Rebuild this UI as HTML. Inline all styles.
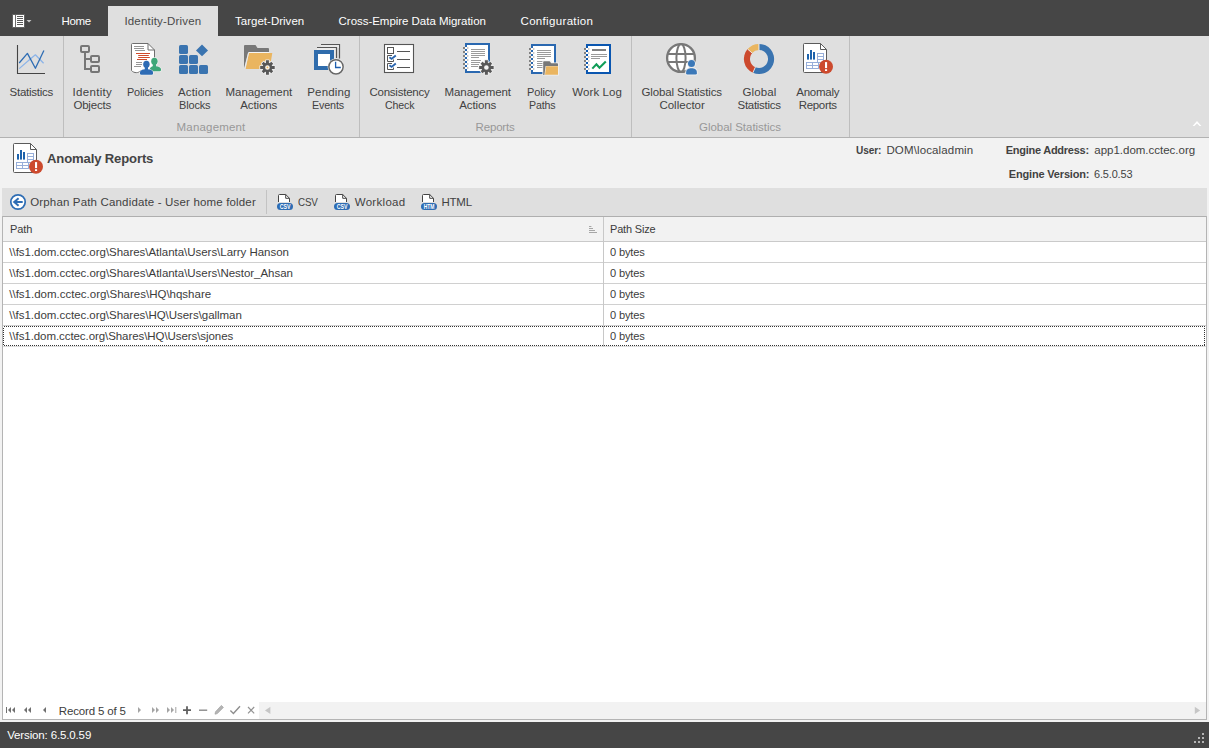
<!DOCTYPE html>
<html lang="en"><head><meta charset="utf-8"><title>Anomaly Reports</title>
<style>
html,body{margin:0;padding:0;}
body{width:1209px;height:748px;overflow:hidden;position:relative;background:#f2f2f2;font-family:"Liberation Sans",sans-serif;font-size:12px;}
.b{position:absolute;}
.t{position:absolute;white-space:pre;font-family:"Liberation Sans",sans-serif;}
svg{position:absolute;overflow:visible;}

</style></head>
<body>
<!-- top dark bar -->
<div class="b" style="left:0;top:0;width:1209px;height:36px;background:#464646"></div>
<div class="b" style="left:108px;top:6px;width:110px;height:30px;background:#dfdfdf"></div>
<!-- ribbon -->
<div class="b" style="left:0;top:36px;width:1209px;height:101px;background:#dfdfdf"></div>
<div class="b" style="left:0;top:137px;width:1209px;height:1px;background:#b2b2b2"></div>
<div class="b" style="left:63px;top:36px;width:1px;height:101px;background:#bebebe"></div>
<div class="b" style="left:359px;top:36px;width:1px;height:101px;background:#bebebe"></div>
<div class="b" style="left:631px;top:36px;width:1px;height:101px;background:#bebebe"></div>
<div class="b" style="left:849px;top:36px;width:1px;height:101px;background:#bebebe"></div>
<!-- toolbar -->
<div class="b" style="left:2px;top:188px;width:1205px;height:28px;background:#dfdfdf"></div>
<div class="b" style="left:266px;top:190px;width:1px;height:24px;background:#c3c3c3"></div>
<!-- grid -->
<div class="b" style="left:2px;top:216px;width:1205px;height:504px;background:#ffffff"></div>
<div class="b" style="left:3px;top:217px;width:1203px;height:24px;background:#f2f2f2"></div>
<div class="b" style="left:2px;top:216px;width:1205px;height:1px;background:#afafaf"></div>
<div class="b" style="left:2px;top:719px;width:1205px;height:1px;background:#b4b4b4"></div>
<div class="b" style="left:2px;top:216px;width:1px;height:504px;background:#b4b4b4"></div>
<div class="b" style="left:1206px;top:216px;width:1px;height:504px;background:#b4b4b4"></div>
<div class="b" style="left:3px;top:241px;width:1203px;height:1px;background:#cacaca"></div>
<div class="b" style="left:3px;top:262px;width:1203px;height:1px;background:#d0d0d0"></div>
<div class="b" style="left:3px;top:283px;width:1203px;height:1px;background:#d0d0d0"></div>
<div class="b" style="left:3px;top:304px;width:1203px;height:1px;background:#d0d0d0"></div>
<div class="b" style="left:3px;top:325px;width:1203px;height:1px;background:#d0d0d0"></div>
<div class="b" style="left:3px;top:346px;width:1203px;height:1px;background:#dcdcdc"></div>
<div class="b" style="left:603px;top:217px;width:1px;height:130px;background:#c8c8c8"></div>
<!-- focus rect -->
<svg style="left:3px;top:326px" width="1202" height="20"><rect x="0.5" y="0.5" width="1201" height="19" fill="none" stroke="#333" stroke-width="1" stroke-dasharray="1 1" shape-rendering="crispEdges"/></svg>
<!-- navigator scroll area -->
<div class="b" style="left:259px;top:702px;width:947px;height:17px;background:#f2f2f2"></div>
<!-- status bar -->
<div class="b" style="left:0;top:722px;width:1209px;height:26px;background:#464646"></div>
<svg style="left:0;top:0" width="1209" height="748" viewBox="0 0 1209 748">
<g><rect x="12" y="14" width="13" height="14" fill="#606060"/><rect x="13" y="15" width="2" height="12" fill="#ffffff"/><rect x="15" y="15" width="1" height="12" fill="#6e6e6e"/><rect x="16" y="15" width="8" height="12" fill="#ffffff"/>
<rect x="17" y="16" width="6" height="1" fill="#5a5a5a"/>
<rect x="17" y="18" width="6" height="1" fill="#5a5a5a"/>
<rect x="17" y="20" width="6" height="1" fill="#5a5a5a"/>
<rect x="17" y="22" width="6" height="1" fill="#5a5a5a"/>
<rect x="17" y="24" width="6" height="1" fill="#5a5a5a"/>
<path d="M26.5,20 h5 l-2.5,2.6z" fill="#c8c8c8"/></g>
<g fill="none"><path d="M17.5,45 V73.5 H45" stroke="#444444" stroke-width="1.1"/><path d="M19.2,68.6 L30,59.3 L35.4,54.8 L43.6,63.3" stroke="#8cb4e8" stroke-width="1.25" stroke-linejoin="round"/><path d="M19.2,63 L27.4,53.4 L35.4,68.3 L43.9,50.5" stroke="#2e6db4" stroke-width="1.3" stroke-linejoin="round"/></g>
<g fill="none" stroke="#767676" stroke-width="2"><rect x="81" y="46" width="8" height="6" rx="1"/><rect x="91" y="56" width="8" height="6" rx="1"/><rect x="91" y="66" width="8" height="6" rx="1"/><path d="M85,53 V69 H90 M85,59 H90"/></g>
<g><path d="M132.5,43.5 H148 L154.5,50 V71 H140 C139,73 134,73.5 131.5,70.5 V44.5 Q131.5,43.5 132.5,43.5Z" fill="#ffffff" stroke="#6e6e6e" stroke-width="1"/><path d="M148,43.5 V50 H154.5" fill="none" stroke="#6e6e6e" stroke-width="1"/><g stroke="#8a8a8a" stroke-width="0.9"><path d="M134,46.5h10M134,48.5h10M135,50.5h10M136,62.5h6M136,64.5h6M134,66.5h7"/></g><g stroke="#d04a2a" stroke-width="1.1"><path d="M136,53.5h14M138.2,55.5h10.6M138.2,57.5h11.6M137,59.5h10"/></g>
<g fill="#f4f4f4" stroke="#f4f4f4" stroke-width="1.1" stroke-linejoin="round"><ellipse cx="154.4" cy="61.3" rx="3.2" ry="3.52"/><path d="M151.10,71.3 Q149.8,71.3 149.8,70.00 L149.8,69.19 C149.8,67.16 152.04,66.6 152.80,66.20 L156.00,66.20 C158.76,66.6 161,67.16 161,69.19 L161,70.00 Q161,71.3 159.70,71.3Z"/></g><g fill="#3fa778"><ellipse cx="154.4" cy="61.3" rx="3.2" ry="3.52"/><path d="M152.80,61.30 L156.00,61.30 L156.00,67.10 L152.80,67.10Z"/><path d="M151.10,71.3 Q149.8,71.3 149.8,70.00 L149.8,69.19 C149.8,67.16 152.04,66.6 152.80,66.20 L156.00,66.20 C158.76,66.6 161,67.16 161,69.19 L161,70.00 Q161,71.3 159.70,71.3Z"/></g>
<g fill="#f4f4f4" stroke="#f4f4f4" stroke-width="1.1" stroke-linejoin="round"><ellipse cx="146.4" cy="64.2" rx="3.2" ry="3.52"/><path d="M141.30,74.8 Q140,74.8 140,73.50 L140,72.46 C140,70.22 142.60,69.6 144.80,69.20 L148.00,69.20 C150.40,69.6 153,70.22 153,72.46 L153,73.50 Q153,74.8 151.70,74.8Z"/></g><g fill="#2e6cb5"><ellipse cx="146.4" cy="64.2" rx="3.2" ry="3.52"/><path d="M144.80,64.20 L148.00,64.20 L148.00,70.10 L144.80,70.10Z"/><path d="M141.30,74.8 Q140,74.8 140,73.50 L140,72.46 C140,70.22 142.60,69.6 144.80,69.20 L148.00,69.20 C150.40,69.6 153,70.22 153,72.46 L153,73.50 Q153,74.8 151.70,74.8Z"/></g>
</g>
<g fill="#3a74b0">
<rect x="179" y="45" width="9" height="9" rx="1.6"/>
<rect x="179" y="55" width="9" height="9" rx="1.6"/>
<rect x="189" y="55" width="9" height="9" rx="1.6"/>
<rect x="179" y="65" width="9" height="9" rx="1.6"/>
<rect x="189" y="65" width="9" height="9" rx="1.6"/>
<rect x="199" y="65" width="9" height="9" rx="1.6"/>
<path d="M202,44.6 L208,50.4 L202,56.2 L196,50.4Z"/></g>
<g><path d="M244,46 Q244,45 245,45 H255.5 L257.5,48 H268 Q269,48 269,49 V53 H248 L244,68.5Z" fill="#787878"/><path d="M248.9,53 H272.3 L269.6,69 H245.6Z" fill="#eab560"/><path d="M248.4,52.5 H269.4" stroke="#f4f4f4" stroke-width="1" fill="none"/><path d="M248.6,52.6 L244.9,68.6" stroke="#ececec" stroke-width="0.9" fill="none"/>
<path d="M266.02,62.82 L265.98,60.20 L268.92,60.20 L268.88,62.82 L269.71,63.16 L271.26,61.70 L273.20,63.64 L271.74,65.19 L272.08,66.02 L274.70,65.98 L274.70,68.92 L272.08,68.88 L271.74,69.71 L273.20,71.26 L271.26,73.20 L269.71,71.74 L268.88,72.08 L268.92,74.70 L265.98,74.70 L266.02,72.08 L265.19,71.74 L263.64,73.20 L261.70,71.26 L263.16,69.71 L262.82,68.88 L260.20,68.92 L260.20,65.98 L262.82,66.02 L263.16,65.19 L261.70,63.64 L263.64,61.70 L265.19,63.16Z M265.15,67.45 a2.3,2.3 0 1,0 4.6,0 a2.3,2.3 0 1,0 -4.6,0Z" fill="#ececec" stroke="#ececec" stroke-width="1.6" stroke-linejoin="round"/>
<circle cx="267.45" cy="67.45" r="2.6" fill="#fbf6ec"/><circle cx="267.45" cy="67.45" r="0.9" fill="#f0b860"/>
<path d="M266.02,62.82 L265.98,60.20 L268.92,60.20 L268.88,62.82 L269.71,63.16 L271.26,61.70 L273.20,63.64 L271.74,65.19 L272.08,66.02 L274.70,65.98 L274.70,68.92 L272.08,68.88 L271.74,69.71 L273.20,71.26 L271.26,73.20 L269.71,71.74 L268.88,72.08 L268.92,74.70 L265.98,74.70 L266.02,72.08 L265.19,71.74 L263.64,73.20 L261.70,71.26 L263.16,69.71 L262.82,68.88 L260.20,68.92 L260.20,65.98 L262.82,66.02 L263.16,65.19 L261.70,63.64 L263.64,61.70 L265.19,63.16Z M265.15,67.45 a2.3,2.3 0 1,0 4.6,0 a2.3,2.3 0 1,0 -4.6,0Z" fill="#565656" fill-rule="evenodd"/></g>
<g><path d="M321,44.5 H339.5 V58.5" fill="none" stroke="#555555" stroke-width="1.2"/><path d="M321,45.2 H339 V58" fill="none" stroke="#f4f4f4" stroke-width="0.01"/><rect x="317" y="48" width="19" height="10" fill="#ececec"/><rect x="321" y="45" width="18" height="3" fill="#e9e9e9"/><path d="M317,47.5 H336.5 V58" fill="none" stroke="#555555" stroke-width="1.2"/><rect x="314" y="50" width="20" height="20" fill="#2f6cac"/><rect x="318" y="54" width="12" height="12" fill="#ffffff"/><circle cx="336" cy="66.8" r="8.4" fill="#ebebeb"/><circle cx="336" cy="66.8" r="7.15" fill="#ffffff" stroke="#686868" stroke-width="1.5"/><path d="M335.6,61.8 V67.5 H340.8" fill="none" stroke="#1f5fae" stroke-width="1.3"/></g>
<g><rect x="384.5" y="44.5" width="29" height="28" fill="#ffffff" stroke="#555555" stroke-width="1.1"/><g fill="none" stroke="#555555" stroke-width="1"><rect x="387.5" y="47.5" width="6" height="6"/><path d="M392,55.5 H387.5 V61.5 H393.5 V59.5"/><path d="M392,63.5 H387.5 V69.5 H393.5 V67.5"/><path d="M397,51.5h13M397,59.5h13M397,67.5h13"/></g><g fill="none" stroke="#2a65ae" stroke-width="1.9"><path d="M389.4,57.2 L391.6,58.9 L395.8,55.4"/><path d="M389.4,65.2 L391.6,66.9 L395.8,63.4"/></g></g>
<g transform="translate(465,43)"><rect x="0" y="0" width="25" height="30" fill="#2a68b0"/><rect x="2" y="2" width="21" height="26" fill="#ffffff"/><rect x="-2" y="4" width="2" height="2" fill="#808080"/><rect x="0" y="4" width="2" height="2" fill="#ffffff"/><rect x="2" y="4" width="1.4" height="2" fill="#c9c9c9"/><rect x="-2" y="8" width="2" height="2" fill="#808080"/><rect x="0" y="8" width="2" height="2" fill="#ffffff"/><rect x="2" y="8" width="1.4" height="2" fill="#c9c9c9"/><rect x="-2" y="12" width="2" height="2" fill="#808080"/><rect x="0" y="12" width="2" height="2" fill="#ffffff"/><rect x="2" y="12" width="1.4" height="2" fill="#c9c9c9"/><rect x="-2" y="16" width="2" height="2" fill="#808080"/><rect x="0" y="16" width="2" height="2" fill="#ffffff"/><rect x="2" y="16" width="1.4" height="2" fill="#c9c9c9"/><rect x="-2" y="20" width="2" height="2" fill="#808080"/><rect x="0" y="20" width="2" height="2" fill="#ffffff"/><rect x="2" y="20" width="1.4" height="2" fill="#c9c9c9"/><rect x="-2" y="24" width="2" height="2" fill="#808080"/><rect x="0" y="24" width="2" height="2" fill="#ffffff"/><rect x="2" y="24" width="1.4" height="2" fill="#c9c9c9"/></g>
<g stroke="#909090" stroke-width="0.9"><path d="M471,49.5h14M471,51.5h14M471,53.5h14M471,55.5h14M471,57.5h8M471,60.5h10M471,62.5h9M471,64.5h8M471,66.5h7"/></g>
<path d="M484.97,62.87 L484.93,60.25 L487.87,60.25 L487.83,62.87 L488.66,63.21 L490.21,61.75 L492.15,63.69 L490.69,65.24 L491.03,66.07 L493.65,66.03 L493.65,68.97 L491.03,68.93 L490.69,69.76 L492.15,71.31 L490.21,73.25 L488.66,71.79 L487.83,72.13 L487.87,74.75 L484.93,74.75 L484.97,72.13 L484.14,71.79 L482.59,73.25 L480.65,71.31 L482.11,69.76 L481.77,68.93 L479.15,68.97 L479.15,66.03 L481.77,66.07 L482.11,65.24 L480.65,63.69 L482.59,61.75 L484.14,63.21Z M484.10,67.50 a2.3,2.3 0 1,0 4.6,0 a2.3,2.3 0 1,0 -4.6,0Z" fill="#ececec" stroke="#ececec" stroke-width="1.6" stroke-linejoin="round"/>
<circle cx="486.4" cy="67.5" r="2.6" fill="#f4f4f4"/>
<path d="M484.97,62.87 L484.93,60.25 L487.87,60.25 L487.83,62.87 L488.66,63.21 L490.21,61.75 L492.15,63.69 L490.69,65.24 L491.03,66.07 L493.65,66.03 L493.65,68.97 L491.03,68.93 L490.69,69.76 L492.15,71.31 L490.21,73.25 L488.66,71.79 L487.83,72.13 L487.87,74.75 L484.93,74.75 L484.97,72.13 L484.14,71.79 L482.59,73.25 L480.65,71.31 L482.11,69.76 L481.77,68.93 L479.15,68.97 L479.15,66.03 L481.77,66.07 L482.11,65.24 L480.65,63.69 L482.59,61.75 L484.14,63.21Z M484.10,67.50 a2.3,2.3 0 1,0 4.6,0 a2.3,2.3 0 1,0 -4.6,0Z" fill="#585858" fill-rule="evenodd"/>
<g transform="translate(531,44)"><rect x="0" y="0" width="25" height="30" fill="#2a68b0"/><rect x="2" y="2" width="21" height="26" fill="#ffffff"/><rect x="-2" y="4" width="2" height="2" fill="#808080"/><rect x="0" y="4" width="2" height="2" fill="#ffffff"/><rect x="2" y="4" width="1.4" height="2" fill="#c9c9c9"/><rect x="-2" y="8" width="2" height="2" fill="#808080"/><rect x="0" y="8" width="2" height="2" fill="#ffffff"/><rect x="2" y="8" width="1.4" height="2" fill="#c9c9c9"/><rect x="-2" y="12" width="2" height="2" fill="#808080"/><rect x="0" y="12" width="2" height="2" fill="#ffffff"/><rect x="2" y="12" width="1.4" height="2" fill="#c9c9c9"/><rect x="-2" y="16" width="2" height="2" fill="#808080"/><rect x="0" y="16" width="2" height="2" fill="#ffffff"/><rect x="2" y="16" width="1.4" height="2" fill="#c9c9c9"/><rect x="-2" y="20" width="2" height="2" fill="#808080"/><rect x="0" y="20" width="2" height="2" fill="#ffffff"/><rect x="2" y="20" width="1.4" height="2" fill="#c9c9c9"/><rect x="-2" y="24" width="2" height="2" fill="#808080"/><rect x="0" y="24" width="2" height="2" fill="#ffffff"/><rect x="2" y="24" width="1.4" height="2" fill="#c9c9c9"/></g>
<g stroke="#909090" stroke-width="0.9"><path d="M537,50.5h14M537,52.5h14M537,54.5h14M537,56.5h14M537,58.5h8M537,61.5h6M537,63.5h6M537,65.5h6M537,67.5h6"/></g>
<g><path d="M542.4,60.6 H551 L552.6,62.6 H558.8 V75.6 H542.4Z" fill="#f2f2f2"/><path d="M543.2,62 Q543.2,61.2 544,61.2 H549.6 L551.2,63.3 H557.2 Q558,63.3 558,64.1 V66 H545.6 L544.4,75 H543.2Z" fill="#787878"/><path d="M546.2,66.2 H558 V74.8 H545Z" fill="#eab560"/></g>
<g transform="translate(586,44)"><rect x="0" y="0" width="25" height="30" fill="#0a56b0"/><rect x="2" y="2" width="21" height="26" fill="#ffffff"/><rect x="-2" y="4" width="2" height="2" fill="#808080"/><rect x="0" y="4" width="2" height="2" fill="#ffffff"/><rect x="2" y="4" width="1.4" height="2" fill="#c9c9c9"/><rect x="-2" y="8" width="2" height="2" fill="#808080"/><rect x="0" y="8" width="2" height="2" fill="#ffffff"/><rect x="2" y="8" width="1.4" height="2" fill="#c9c9c9"/><rect x="-2" y="12" width="2" height="2" fill="#808080"/><rect x="0" y="12" width="2" height="2" fill="#ffffff"/><rect x="2" y="12" width="1.4" height="2" fill="#c9c9c9"/><rect x="-2" y="16" width="2" height="2" fill="#808080"/><rect x="0" y="16" width="2" height="2" fill="#ffffff"/><rect x="2" y="16" width="1.4" height="2" fill="#c9c9c9"/><rect x="-2" y="20" width="2" height="2" fill="#808080"/><rect x="0" y="20" width="2" height="2" fill="#ffffff"/><rect x="2" y="20" width="1.4" height="2" fill="#c9c9c9"/><rect x="-2" y="24" width="2" height="2" fill="#808080"/><rect x="0" y="24" width="2" height="2" fill="#ffffff"/><rect x="2" y="24" width="1.4" height="2" fill="#c9c9c9"/></g>
<rect x="592" y="49" width="14" height="2" fill="#808080"/><g stroke="#909090" stroke-width="0.9"><path d="M591,54.5h16M591,56.5h16M591,58.5h9"/></g><path d="M592.3,68.6 L596.4,64.2 L599.5,67.8 L605.8,61.6" fill="none" stroke="#109d58" stroke-width="2.1"/>
<g><circle cx="681" cy="58" r="13.9" fill="#ffffff" stroke="#787878" stroke-width="2.3"/><g fill="none" stroke="#787878" stroke-width="2"><ellipse cx="681" cy="58" rx="4.6" ry="13.9"/><path d="M668,54 H694 M668,62 H694"/></g>
<g fill="#efefef" stroke="#efefef" stroke-width="1.8" stroke-linejoin="round"><ellipse cx="691.5" cy="63.6" rx="3.5" ry="3.50"/><path d="M687.40,74.6 Q686.1,74.6 686.1,73.30 L686.1,72.68 C686.1,69.16 688.48,68.2 691.5,68.2 C694.52,68.2 696.9,69.16 696.9,72.68 L696.9,73.30 Q696.9,74.6 695.60,74.6Z"/></g><g fill="#3b78b8"><ellipse cx="691.5" cy="63.6" rx="3.5" ry="3.50"/><path d="M687.40,74.6 Q686.1,74.6 686.1,73.30 L686.1,72.68 C686.1,69.16 688.48,68.2 691.5,68.2 C694.52,68.2 696.9,69.16 696.9,72.68 L696.9,73.30 Q696.9,74.6 695.60,74.6Z"/></g>
</g>
<g><path d="M759.00,43.90 A15.1,15.1 0 1,1 752.86,72.79 L755.34,67.22 A9,9 0 1,0 759.00,50.00Z" fill="#3a74b0"/><path d="M752.86,72.79 A15.1,15.1 0 0,1 747.60,49.09 L752.21,53.10 A9,9 0 0,0 755.34,67.22Z" fill="#cc4a2e"/><path d="M747.60,49.09 A15.1,15.1 0 0,1 758.74,43.90 L758.84,50.00 A9,9 0 0,0 752.21,53.10Z" fill="#eab660"/><g stroke="#f0ece6" stroke-width="0.9"><path d="M759,43.9 V50"/><path d="M752.86,72.79 L755.34,67.22"/><path d="M747.6,49.1 L752.2,53.1"/></g></g>
<g transform="translate(803,43)"><path d="M1.5,0.5 H17.5 L23.5,6.5 V28.5 Q23.5,29.5 22.5,29.5 H1.5 Q0.5,29.5 0.5,28.5 V1.5 Q0.5,0.5 1.5,0.5Z" fill="#ffffff" stroke="#5a5a5a" stroke-width="1"/><path d="M17.5,0.5 V6.5 H23.5" fill="none" stroke="#5a5a5a" stroke-width="1"/><rect x="4" y="11" width="2" height="5.6" fill="#1c62ac"/><rect x="7" y="7" width="2" height="9.6" fill="#1c62ac"/><rect x="10" y="9" width="2" height="7.6" fill="#1c62ac"/><g fill="none" stroke="#92abd8" stroke-width="0.95"><rect x="14.5" y="10.5" width="6" height="9"/><path d="M14.5,13.5h6M14.5,16.5h6"/><rect x="3.5" y="19.5" width="12" height="6"/><path d="M3.5,22.5h12M9.5,19.5v6"/></g><circle cx="23" cy="23.8" r="7.6" fill="#f2f2f2" opacity="0"/><circle cx="23" cy="23.8" r="7" fill="#cc4a2e"/><rect x="22" y="19.1" width="2.1" height="6" fill="#ffffff"/><rect x="22" y="26.2" width="2.1" height="1.8" fill="#ffffff"/></g>
<g transform="translate(13,143)"><path d="M1.5,0.5 H17.5 L23.5,6.5 V28.5 Q23.5,29.5 22.5,29.5 H1.5 Q0.5,29.5 0.5,28.5 V1.5 Q0.5,0.5 1.5,0.5Z" fill="#ffffff" stroke="#5a5a5a" stroke-width="1"/><path d="M17.5,0.5 V6.5 H23.5" fill="none" stroke="#5a5a5a" stroke-width="1"/><rect x="4" y="11" width="2" height="5.6" fill="#1c62ac"/><rect x="7" y="7" width="2" height="9.6" fill="#1c62ac"/><rect x="10" y="9" width="2" height="7.6" fill="#1c62ac"/><g fill="none" stroke="#92abd8" stroke-width="0.95"><rect x="14.5" y="10.5" width="6" height="9"/><path d="M14.5,13.5h6M14.5,16.5h6"/><rect x="3.5" y="19.5" width="12" height="6"/><path d="M3.5,22.5h12M9.5,19.5v6"/></g><circle cx="23" cy="23.8" r="7.6" fill="#f2f2f2" opacity="0"/><circle cx="23" cy="23.8" r="7" fill="#cc4a2e"/><rect x="22" y="19.1" width="2.1" height="6" fill="#ffffff"/><rect x="22" y="26.2" width="2.1" height="1.8" fill="#ffffff"/></g>
<path d="M1192.6,125.9 L1197,121.1 L1201.4,125.9 L1199.6,125.9 L1197,123.5 L1194.4,125.9Z" fill="#ffffff"/>
<g><circle cx="18" cy="202" r="7.2" fill="#ffffff" stroke="#2e6db4" stroke-width="1.7"/><path d="M14,202 H22.7" stroke="#2e6db4" stroke-width="2" fill="none"/><path d="M18.6,198.2 L14.2,202 L18.6,205.8" stroke="#2e6db4" stroke-width="2" fill="none"/></g>
<g transform="translate(277,194)"><path d="M1.5,8 V1.5 Q1.5,0.5 2.5,0.5 H8.7 L12.5,4.3 V8" fill="#ffffff" stroke="#444444" stroke-width="1"/><path d="M8.7,0.5 V4.3 H12.5" fill="none" stroke="#444444" stroke-width="1"/><rect x="0" y="9" width="16" height="7" rx="3.5" fill="#2e6db4"/><text x="8.1" y="15.1" font-family="Liberation Sans, sans-serif" font-size="7" font-weight="bold" fill="#ffffff" text-anchor="middle" textLength="10.8" lengthAdjust="spacingAndGlyphs">CSV</text></g>
<g transform="translate(334,194)"><path d="M1.5,8 V1.5 Q1.5,0.5 2.5,0.5 H8.7 L12.5,4.3 V8" fill="#ffffff" stroke="#444444" stroke-width="1"/><path d="M8.7,0.5 V4.3 H12.5" fill="none" stroke="#444444" stroke-width="1"/><rect x="0" y="9" width="16" height="7" rx="3.5" fill="#2e6db4"/><text x="8.1" y="15.1" font-family="Liberation Sans, sans-serif" font-size="7" font-weight="bold" fill="#ffffff" text-anchor="middle" textLength="10.8" lengthAdjust="spacingAndGlyphs">CSV</text></g>
<g transform="translate(421,194)"><path d="M1.5,8 V1.5 Q1.5,0.5 2.5,0.5 H8.7 L12.5,4.3 V8" fill="#ffffff" stroke="#444444" stroke-width="1"/><path d="M8.7,0.5 V4.3 H12.5" fill="none" stroke="#444444" stroke-width="1"/><rect x="0" y="9" width="16" height="7" rx="3.5" fill="#2e6db4"/><text x="8.1" y="15.1" font-family="Liberation Sans, sans-serif" font-size="7" font-weight="bold" fill="#ffffff" text-anchor="middle" textLength="10.8" lengthAdjust="spacingAndGlyphs">HTM</text></g>
<g fill="#a6a6a6"><rect x="589" y="226" width="2.4" height="1"/><rect x="589" y="228" width="4" height="1"/><rect x="589" y="230" width="6" height="1"/><rect x="589" y="232" width="8" height="1"/></g>
<g fill="#707070"><rect x="6" y="707" width="1" height="6"/><path d="M11,707 V713 L8,710Z"/><path d="M15,707 V713 L12,710Z"/><path d="M27,707 V713 L24,710Z"/><path d="M31,707 V713 L28,710Z"/><path d="M46,707 V713 L43,710Z"/></g><g fill="#a4a4a4"><path d="M138,707 V713 L141,710Z"/><path d="M152,707 V713 L155,710Z"/><path d="M156,707 V713 L159,710Z"/><path d="M167,707 V713 L170,710Z"/><path d="M171,707 V713 L174,710Z"/><rect x="175.3" y="707" width="1" height="6"/></g>
<path d="M183,710.2 H191 M187,706.2 V714.2" stroke="#606060" stroke-width="1.8" fill="none"/>
<path d="M199,710.2 H207.2" stroke="#8a8a8a" stroke-width="1.4" fill="none"/>
<path d="M221.4,705.4 L223.4,707.4 L217.3,713.6 L215,714.2 L215.5,711.8Z" fill="#b4b4b4" stroke="#a0a0a0" stroke-width="0.7"/>
<path d="M230.4,710.6 L233.4,713.4 L240,706.2" fill="none" stroke="#8e8e8e" stroke-width="1.4"/>
<path d="M248,707 L254.2,713.4 M254.2,707 L248,713.4" fill="none" stroke="#949494" stroke-width="1.2"/>
<path d="M270.4,706.8 V714 L265,710.4Z" fill="#c6c6c6"/><path d="M1194.8,706.8 V714 L1200.2,710.4Z" fill="#c6c6c6"/>
<g fill="#b4b4b4">
<rect x="1202" y="733" width="2" height="2"/>
<rect x="1198" y="737" width="2" height="2"/>
<rect x="1202" y="737" width="2" height="2"/>
<rect x="1194" y="741" width="2" height="2"/>
<rect x="1198" y="741" width="2" height="2"/>
<rect x="1202" y="741" width="2" height="2"/>
</g>
</svg>

<span class="t" style="left:61.50px;top:13.02px;font-size:11.5px;line-height:16px;letter-spacing:-0.327px;color:#ffffff;">Home</span>
<span class="t" style="left:124.40px;top:13.02px;font-size:11.5px;line-height:16px;letter-spacing:0.190px;color:#4a4a4a;">Identity-Driven</span>
<span class="t" style="left:235.00px;top:13.02px;font-size:11.5px;line-height:16px;letter-spacing:0.014px;color:#ffffff;">Target-Driven</span>
<span class="t" style="left:338.60px;top:13.02px;font-size:11.5px;line-height:16px;letter-spacing:-0.037px;color:#ffffff;">Cross-Empire Data Migration</span>
<span class="t" style="left:520.50px;top:13.02px;font-size:11.5px;line-height:16px;letter-spacing:0.333px;color:#ffffff;">Configuration</span>
<span class="t" style="left:9.50px;top:84.02px;font-size:11.5px;line-height:16px;letter-spacing:-0.240px;color:#424242;">Statistics</span>
<span class="t" style="left:72.40px;top:84.02px;font-size:11.5px;line-height:16px;letter-spacing:0.339px;color:#424242;">Identity</span>
<span class="t" style="left:73.40px;top:97.02px;font-size:11.5px;line-height:16px;letter-spacing:-0.189px;color:#424242;">Objects</span>
<span class="t" style="left:126.60px;top:84.02px;font-size:11.5px;line-height:16px;letter-spacing:-0.150px;color:#424242;transform:scaleX(0.9452);transform-origin:0 0;">Policies</span>
<span class="t" style="left:178.00px;top:84.02px;font-size:11.5px;line-height:16px;letter-spacing:0.167px;color:#424242;">Action</span>
<span class="t" style="left:178.60px;top:97.02px;font-size:11.5px;line-height:16px;letter-spacing:-0.150px;color:#424242;transform:scaleX(0.9529);transform-origin:0 0;">Blocks</span>
<span class="t" style="left:225.50px;top:84.02px;font-size:11.5px;line-height:16px;letter-spacing:-0.048px;color:#424242;">Management</span>
<span class="t" style="left:240.20px;top:97.02px;font-size:11.5px;line-height:16px;letter-spacing:-0.110px;color:#424242;">Actions</span>
<span class="t" style="left:307.30px;top:84.02px;font-size:11.5px;line-height:16px;letter-spacing:0.149px;color:#424242;">Pending</span>
<span class="t" style="left:312.20px;top:97.02px;font-size:11.5px;line-height:16px;letter-spacing:-0.150px;color:#424242;transform:scaleX(0.9349);transform-origin:0 0;">Events</span>
<span class="t" style="left:369.40px;top:84.02px;font-size:11.5px;line-height:16px;letter-spacing:-0.229px;color:#424242;">Consistency</span>
<span class="t" style="left:384.70px;top:97.02px;font-size:11.5px;line-height:16px;letter-spacing:-0.150px;color:#424242;transform:scaleX(0.9210);transform-origin:0 0;">Check</span>
<span class="t" style="left:444.50px;top:84.02px;font-size:11.5px;line-height:16px;letter-spacing:-0.070px;color:#424242;">Management</span>
<span class="t" style="left:459.20px;top:97.02px;font-size:11.5px;line-height:16px;letter-spacing:-0.110px;color:#424242;">Actions</span>
<span class="t" style="left:527.20px;top:84.02px;font-size:11.5px;line-height:16px;letter-spacing:-0.150px;color:#424242;transform:scaleX(0.9544);transform-origin:0 0;">Policy</span>
<span class="t" style="left:528.60px;top:97.02px;font-size:11.5px;line-height:16px;letter-spacing:-0.150px;color:#424242;transform:scaleX(0.9223);transform-origin:0 0;">Paths</span>
<span class="t" style="left:572.30px;top:84.02px;font-size:11.5px;line-height:16px;letter-spacing:0.085px;color:#424242;">Work Log</span>
<span class="t" style="left:641.50px;top:84.02px;font-size:11.5px;line-height:16px;letter-spacing:-0.119px;color:#424242;">Global Statistics</span>
<span class="t" style="left:659.40px;top:97.02px;font-size:11.5px;line-height:16px;letter-spacing:0.007px;color:#424242;">Collector</span>
<span class="t" style="left:742.50px;top:84.02px;font-size:11.5px;line-height:16px;letter-spacing:0.123px;color:#424242;">Global</span>
<span class="t" style="left:737.50px;top:97.02px;font-size:11.5px;line-height:16px;letter-spacing:-0.285px;color:#424242;">Statistics</span>
<span class="t" style="left:796.30px;top:84.02px;font-size:11.5px;line-height:16px;letter-spacing:-0.265px;color:#424242;">Anomaly</span>
<span class="t" style="left:798.70px;top:97.02px;font-size:11.5px;line-height:16px;letter-spacing:-0.319px;color:#424242;">Reports</span>
<span class="t" style="left:176.60px;top:119.02px;font-size:11.5px;line-height:16px;letter-spacing:0.175px;color:#989898;">Management</span>
<span class="t" style="left:475.60px;top:119.02px;font-size:11.5px;line-height:16px;letter-spacing:-0.186px;color:#989898;">Reports</span>
<span class="t" style="left:699.00px;top:119.02px;font-size:11.5px;line-height:16px;letter-spacing:-0.031px;color:#989898;">Global Statistics</span>
<span class="t" style="left:47.10px;top:151.32px;font-size:13.5px;line-height:16px;letter-spacing:-0.150px;color:#444444;font-weight:bold;transform:scaleX(0.9701);transform-origin:0 0;">Anomaly Reports</span>
<span class="t" style="left:855.90px;top:142.19px;font-size:11px;line-height:16px;letter-spacing:-0.150px;color:#424242;font-weight:bold;transform:scaleX(0.9196);transform-origin:0 0;">User:</span>
<span class="t" style="left:886.40px;top:142.02px;font-size:11.5px;line-height:16px;letter-spacing:0.138px;color:#424242;">DOM\localadmin</span>
<span class="t" style="left:1005.80px;top:142.19px;font-size:11px;line-height:16px;letter-spacing:-0.267px;color:#424242;font-weight:bold;">Engine Address:</span>
<span class="t" style="left:1094.30px;top:142.02px;font-size:11.5px;line-height:16px;letter-spacing:-0.012px;color:#424242;">app1.dom.cctec.org</span>
<span class="t" style="left:1008.80px;top:166.19px;font-size:11px;line-height:16px;letter-spacing:-0.176px;color:#424242;font-weight:bold;">Engine Version:</span>
<span class="t" style="left:1094.30px;top:166.02px;font-size:11.5px;line-height:16px;letter-spacing:-0.150px;color:#424242;transform:scaleX(0.9497);transform-origin:0 0;">6.5.0.53</span>
<span class="t" style="left:30.20px;top:194.02px;font-size:11.5px;line-height:16px;letter-spacing:0.161px;color:#424242;">Orphan Path Candidate - User home folder</span>
<span class="t" style="left:297.60px;top:194.02px;font-size:11.5px;line-height:16px;letter-spacing:-0.150px;color:#424242;transform:scaleX(0.8532);transform-origin:0 0;">CSV</span>
<span class="t" style="left:354.70px;top:194.02px;font-size:11.5px;line-height:16px;letter-spacing:0.305px;color:#424242;">Workload</span>
<span class="t" style="left:441.50px;top:194.02px;font-size:11.5px;line-height:16px;letter-spacing:-0.236px;color:#424242;">HTML</span>
<span class="t" style="left:9.50px;top:221.02px;font-size:11.5px;line-height:16px;letter-spacing:-0.150px;color:#3c3c3c;transform:scaleX(0.9601);transform-origin:0 0;">Path</span>
<span class="t" style="left:610.30px;top:221.02px;font-size:11.5px;line-height:16px;letter-spacing:-0.150px;color:#3c3c3c;transform:scaleX(0.9511);transform-origin:0 0;">Path Size</span>
<span class="t" style="left:9.30px;top:244.02px;font-size:11.5px;line-height:16px;letter-spacing:-0.030px;color:#3c3c3c;">\\fs1.dom.cctec.org\Shares\Atlanta\Users\Larry Hanson</span>
<span class="t" style="left:610.30px;top:244.02px;font-size:11.5px;line-height:16px;letter-spacing:-0.150px;color:#3c3c3c;transform:scaleX(0.9636);transform-origin:0 0;">0 bytes</span>
<span class="t" style="left:9.30px;top:265.02px;font-size:11.5px;line-height:16px;letter-spacing:-0.027px;color:#3c3c3c;">\\fs1.dom.cctec.org\Shares\Atlanta\Users\Nestor_Ahsan</span>
<span class="t" style="left:610.30px;top:265.02px;font-size:11.5px;line-height:16px;letter-spacing:-0.150px;color:#3c3c3c;transform:scaleX(0.9636);transform-origin:0 0;">0 bytes</span>
<span class="t" style="left:9.30px;top:286.02px;font-size:11.5px;line-height:16px;letter-spacing:-0.005px;color:#3c3c3c;">\\fs1.dom.cctec.org\Shares\HQ\hqshare</span>
<span class="t" style="left:610.30px;top:286.02px;font-size:11.5px;line-height:16px;letter-spacing:-0.150px;color:#3c3c3c;transform:scaleX(0.9636);transform-origin:0 0;">0 bytes</span>
<span class="t" style="left:9.30px;top:307.02px;font-size:11.5px;line-height:16px;letter-spacing:-0.032px;color:#3c3c3c;">\\fs1.dom.cctec.org\Shares\HQ\Users\gallman</span>
<span class="t" style="left:610.30px;top:307.02px;font-size:11.5px;line-height:16px;letter-spacing:-0.150px;color:#3c3c3c;transform:scaleX(0.9636);transform-origin:0 0;">0 bytes</span>
<span class="t" style="left:9.30px;top:328.02px;font-size:11.5px;line-height:16px;letter-spacing:-0.072px;color:#3c3c3c;">\\fs1.dom.cctec.org\Shares\HQ\Users\sjones</span>
<span class="t" style="left:610.30px;top:328.02px;font-size:11.5px;line-height:16px;letter-spacing:-0.150px;color:#3c3c3c;transform:scaleX(0.9636);transform-origin:0 0;">0 bytes</span>
<span class="t" style="left:58.80px;top:703.02px;font-size:11.5px;line-height:16px;letter-spacing:-0.154px;color:#3c3c3c;">Record 5 of 5</span>
<span class="t" style="left:7.20px;top:727.02px;font-size:11.5px;line-height:16px;letter-spacing:-0.139px;color:#ffffff;">Version: 6.5.0.59</span>
</body></html>
